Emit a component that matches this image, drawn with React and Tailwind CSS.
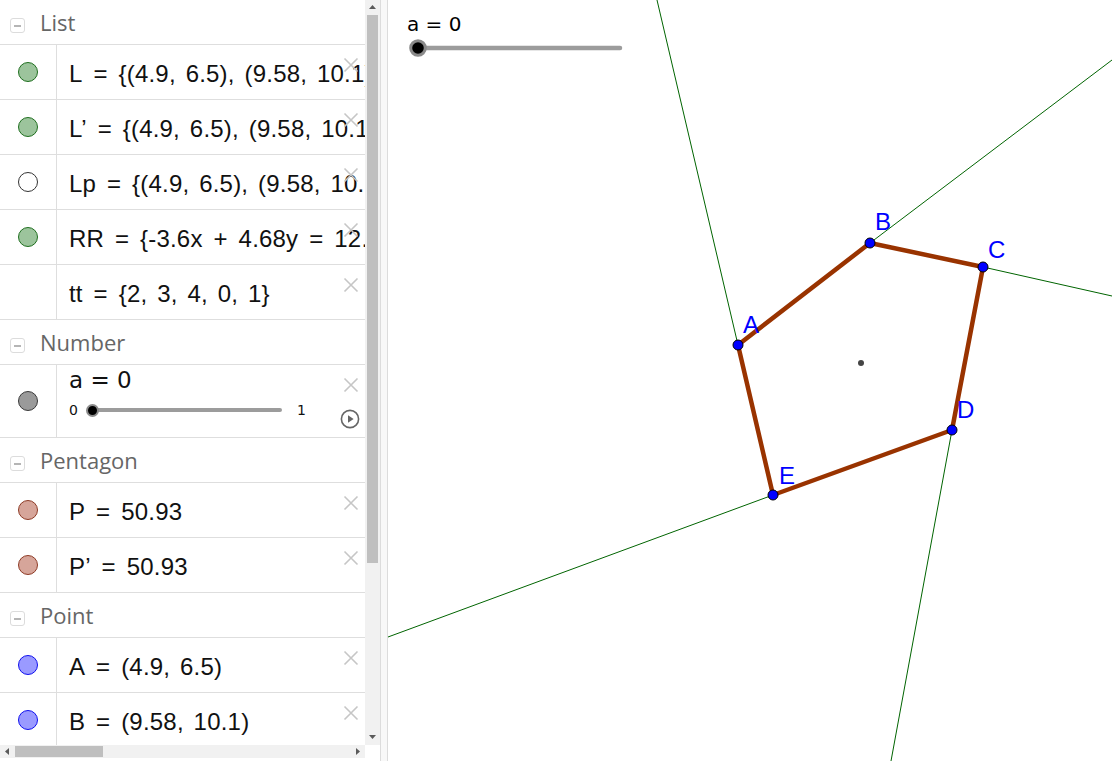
import React from "react";

const DOTS = {
  green: "bg-[#9cc49c] border-[#1f6f1f]",
  white: "bg-white border-[#333333]",
  gray: "bg-[#9a9a9a] border-[#3a3a3a]",
  brown: "bg-[#d6a59a] border-[#8e3b26]",
  blue: "bg-[#9a9aff] border-[#1010ee]",
};

function Dot({ kind }) {
  if (!kind) return null;
  return <span className={"block h-[20px] w-[20px] rounded-full border " + DOTS[kind]} />;
}

function XIcon() {
  return (
    <svg className="absolute right-[6px] top-[12px]" width="16" height="16" viewBox="0 0 16 16">
      <path d="M1.5 1.5 L14.5 14.5 M14.5 1.5 L1.5 14.5" stroke="#c6c6c6" strokeWidth="1.6" fill="none" />
    </svg>
  );
}

function Op({ children }) {
  return <span className="mx-[1px]">{children}</span>;
}

function Row({ dot, children }) {
  return (
    <div className="relative flex h-[55px] border-t border-[#dedede]">
      <div className="flex w-[57px] shrink-0 items-center justify-center border-r border-[#dedede]">
        <Dot kind={dot} />
      </div>
      <div className="flex min-w-0 flex-1 items-center overflow-hidden whitespace-nowrap pl-[12px] pt-[4px] font-['Liberation_Sans',Arial,sans-serif] text-[24px] tracking-[0.2px] text-[#111] [word-spacing:3px]">
        <span>{children}</span>
      </div>
      <XIcon />
    </div>
  );
}

function Header({ title }) {
  return (
    <div className="flex h-[44px] items-center pl-[10px]">
      <span className="mt-[7px] flex h-[15px] w-[15px] items-center justify-center rounded-[3px] border border-[#dcdcdc]">
        <span className="block h-[2px] w-[7px] bg-[#b5b5b5]" />
      </span>
      <span className="ml-[15px] font-['Open_Sans',sans-serif] text-[22px] leading-none text-[#666666]">{title}</span>
    </div>
  );
}

function Group({ title, children }) {
  return (
    <div className="border-b border-[#dedede]">
      <Header title={title} />
      {children}
    </div>
  );
}

function SliderRow() {
  return (
    <div className="relative flex h-[73px] border-t border-[#dedede]">
      <div className="flex w-[57px] shrink-0 items-center justify-center border-r border-[#dedede]">
        <Dot kind="gray" />
      </div>
      <div className="flex flex-1 flex-col pl-[12px] pt-[4px] font-['DejaVu_Sans',sans-serif] text-[#111]">
        <span className="text-[23px] leading-none">a = 0</span>
        <div className="mt-[11px] flex h-[14px] items-center text-[14px] leading-none">
          <span className="w-[8px]">0</span>
          <div className="relative ml-[15px] h-[4px] w-[190px] rounded-full bg-[#9c9c9c]">
            <span className="absolute left-[-6px] top-[-4.5px] block h-[13px] w-[13px] rounded-full border-2 border-[#8a8a8a] bg-black" />
          </div>
          <span className="ml-[15px]">1</span>
        </div>
      </div>
      <XIcon />
      <svg className="absolute right-[5px] top-[44px]" width="20" height="20" viewBox="0 0 20 20">
        <circle cx="10" cy="10" r="8.6" stroke="#666" strokeWidth="1.6" fill="none" />
        <path d="M8 6.3 L13.6 10 L8 13.7 Z" fill="#666" />
      </svg>
    </div>
  );
}

function Tri({ dir }) {
  const d = {
    up: "M1 6 L4.5 2 L8 6 Z",
    down: "M1 3 L4.5 7 L8 3 Z",
    left: "M6 1 L2 4.5 L6 8 Z",
    right: "M3 1 L7 4.5 L3 8 Z",
  }[dir];
  return (
    <svg width="9" height="9" viewBox="0 0 9 9">
      <path d={d} fill="#5a5a5a" />
    </svg>
  );
}

function AlgebraView() {
  return (
    <div className="flex w-[380px] shrink-0 flex-col">
      <div className="flex h-[745px]">
        <div className="w-[365px] overflow-hidden">
          <Group title="List">
            <Row dot="green">L<Op> =</Op> {"{(4.9, 6.5), (9.58, 10.1)}"}</Row>
            <Row dot="green">L’<Op> =</Op> {"{(4.9, 6.5), (9.58, 10.1)}"}</Row>
            <Row dot="white">Lp<Op> =</Op> {"{(4.9, 6.5), (9.58, 10.1)}"}</Row>
            <Row dot="green">RR<Op> =</Op> {"{-3.6x"}<Op> +</Op> 4.68y<Op> =</Op> {"12.78}"}</Row>
            <Row>tt<Op> =</Op> {"{2, 3, 4, 0, 1}"}</Row>
          </Group>
          <Group title="Number">
            <SliderRow />
          </Group>
          <Group title="Pentagon">
            <Row dot="brown">P<Op> =</Op> 50.93</Row>
            <Row dot="brown">P’<Op> =</Op> 50.93</Row>
          </Group>
          <Group title="Point">
            <Row dot="blue">A<Op> =</Op> (4.9, 6.5)</Row>
            <Row dot="blue">B<Op> =</Op> (9.58, 10.1)</Row>
          </Group>
        </div>
        <div className="flex w-[15px] flex-col items-center bg-[#f1f1f1]">
          <div className="flex h-[15px] items-center justify-center">
            <Tri dir="up" />
          </div>
          <div className="h-[548px] w-[11px] bg-[#bfbfbf]" />
          <div className="flex-1" />
          <div className="flex h-[17px] items-center justify-center">
            <Tri dir="down" />
          </div>
        </div>
      </div>
      <div className="flex h-[13px]">
        <div className="flex w-[365px] items-center bg-[#f1f1f1]">
          <div className="flex w-[15px] items-center justify-center">
            <Tri dir="left" />
          </div>
          <div className="h-[11px] w-[88px] bg-[#bfbfbf]" />
          <div className="flex-1" />
          <div className="flex w-[15px] items-center justify-center">
            <Tri dir="right" />
          </div>
        </div>
      </div>
    </div>
  );
}

const P = {
  A: [350, 345],
  B: [482, 243],
  C: [595, 267],
  D: [564, 430],
  E: [385, 495],
};

function GraphicsView() {
  const order = ["A", "B", "C", "D", "E"];
  const poly = order.map((k) => P[k].join(",")).join(" ");
  return (
    <div className="relative flex-1 overflow-hidden bg-white">
      <svg className="absolute inset-0" width="724" height="761" viewBox="0 0 724 761">
        <g stroke="#006400" strokeWidth="1" fill="none">
          <line x1="350" y1="345" x2="269" y2="0" />
          <line x1="482" y1="243" x2="724" y2="60" />
          <line x1="595" y1="267" x2="724" y2="296" />
          <line x1="564" y1="430" x2="503" y2="761" />
          <line x1="385" y1="495" x2="0" y2="637" />
        </g>
        <polygon points={poly} fill="none" stroke="#993300" strokeWidth="4.5" strokeLinejoin="round" />
        <circle cx="473" cy="363" r="3" fill="#444" />
        {order.map((k) => (
          <circle key={k} cx={P[k][0]} cy={P[k][1]} r="5" fill="#0000ff" stroke="#000" strokeWidth="1" />
        ))}
        <line x1="30" y1="48" x2="232" y2="48" stroke="#9c9c9c" strokeWidth="4.5" strokeLinecap="round" />
        <circle cx="30" cy="48" r="7.3" fill="#000" stroke="#8a8a8a" strokeWidth="3" />
      </svg>
      <span className="absolute left-[19px] top-[14px] font-['DejaVu_Sans',sans-serif] text-[20px] leading-none text-black">
        a = 0
      </span>
      <span className="absolute left-[355px] top-[313px] font-['Liberation_Sans',Arial,sans-serif] text-[24px] leading-none text-[#0000ff]">A</span>
      <span className="absolute left-[487px] top-[210px] font-['Liberation_Sans',Arial,sans-serif] text-[24px] leading-none text-[#0000ff]">B</span>
      <span className="absolute left-[600px] top-[238px] font-['Liberation_Sans',Arial,sans-serif] text-[24px] leading-none text-[#0000ff]">C</span>
      <span className="absolute left-[569px] top-[398px] font-['Liberation_Sans',Arial,sans-serif] text-[24px] leading-none text-[#0000ff]">D</span>
      <span className="absolute left-[391px] top-[464px] font-['Liberation_Sans',Arial,sans-serif] text-[24px] leading-none text-[#0000ff]">E</span>
    </div>
  );
}

export default function App() {
  return (
    <div className="flex h-[761px] w-[1112px] overflow-hidden bg-white">
      <AlgebraView />
      <div className="w-[8px] shrink-0 border-x border-[#dcdcdc] bg-[#f8f8f8]" />
      <GraphicsView />
    </div>
  );
}
